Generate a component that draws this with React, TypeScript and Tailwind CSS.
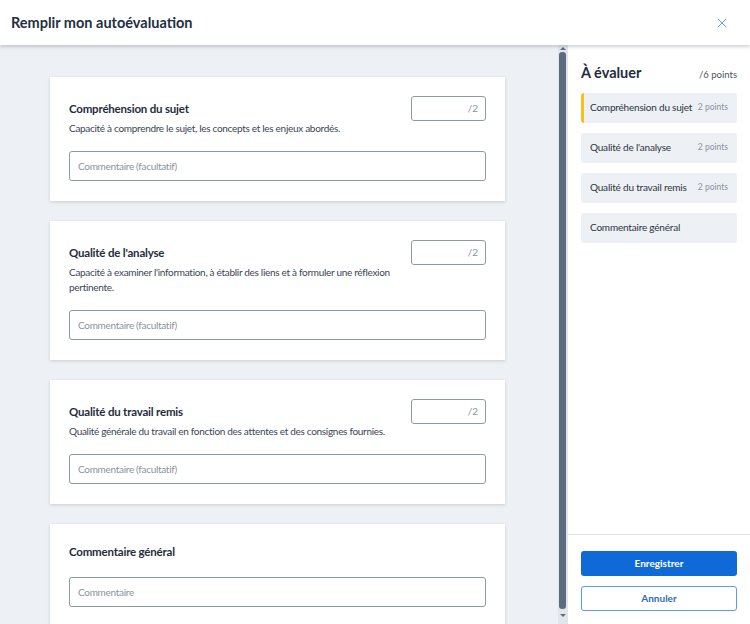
import { X } from "lucide-react";

type Criterion = {
  title: string;
  description?: string;
  max?: number;
  placeholder: string;
};

const criteria: Criterion[] = [
  {
    title: "Compréhension du sujet",
    description: "Capacité à comprendre le sujet, les concepts et les enjeux abordés.",
    max: 2,
    placeholder: "Commentaire (facultatif)",
  },
  {
    title: "Qualité de l'analyse",
    description:
      "Capacité à examiner l'information, à établir des liens et à formuler une réflexion pertinente.",
    max: 2,
    placeholder: "Commentaire (facultatif)",
  },
  {
    title: "Qualité du travail remis",
    description: "Qualité générale du travail en fonction des attentes et des consignes fournies.",
    max: 2,
    placeholder: "Commentaire (facultatif)",
  },
  {
    title: "Commentaire général",
    placeholder: "Commentaire",
  },
];

const summary = [
  { label: "Compréhension du sujet", points: "2 points", active: true },
  { label: "Qualité de l'analyse", points: "2 points" },
  { label: "Qualité du travail remis", points: "2 points" },
  { label: "Commentaire général" },
];

function CriterionCard({ c }: { c: Criterion }) {
  return (
    <div className="bg-white px-[19px] pt-[19px] pb-[20px] shadow-[0_1px_3px_rgba(30,45,60,0.18)]">
      {c.max ? (
        <div className="flex items-start justify-between">
          <div className="w-[336px]">
            <div className="h-[25px] flex items-center text-[11.5px] tracking-[-0.2px] font-bold text-[#1f2d3d]">
              {c.title}
            </div>
            <p className="text-[10px] tracking-[-0.3px] leading-[15px] text-[#3a4654]">{c.description}</p>
          </div>
          <div className="w-[75px] h-[25px] shrink-0 rounded-[3px] border border-[#8d99a7] flex items-center justify-end pr-[7px] text-[10px] text-[#8a939d]">
            /{c.max}
          </div>
        </div>
      ) : (
        <div className="text-[11.5px] tracking-[-0.2px] font-bold text-[#1f2d3d] leading-[15px] pt-[1px]">
          {c.title}
        </div>
      )}
      <input
        placeholder={c.placeholder}
        className={`block w-full h-[30px] rounded-[3px] border border-[#8d99a7] px-[8px] text-[10px] tracking-[-0.3px] text-[#1f2d3d] placeholder:text-[#8a939d] outline-none ${
          c.max ? "mt-[15px]" : "mt-[18px]"
        }`}
      />
    </div>
  );
}

export default function App() {
  return (
    <div
      className="w-[750px] h-[624px] flex flex-col bg-white overflow-hidden"
      style={{ fontFamily: "Lato, 'Noto Sans', sans-serif" }}
    >
      {/* Header */}
      <header className="relative z-10 h-[45px] shrink-0 flex items-center justify-between pl-[11px] pr-[20px] bg-white shadow-[0_2px_3px_rgba(30,45,60,0.2)]">
        <h1 className="text-[14.5px] font-bold text-[#22303f]">Remplir mon autoévaluation</h1>
        <X size={16} strokeWidth={1.3} className="text-[#4a90e2]" />
      </header>

      <div className="flex flex-1 min-h-0">
        {/* Criteria list */}
        <main className="w-[558px] bg-[#edf0f4] pt-[32px] overflow-hidden">
          <div className="w-[455px] ml-[50px] flex flex-col gap-[20px]">
            {criteria.map((c) => (
              <CriterionCard key={c.title} c={c} />
            ))}
          </div>
        </main>

        {/* Scrollbar */}
        <div className="w-[9px] flex flex-col items-center bg-[#e2e6eb]">
          <div className="h-[6px] flex items-end pb-[1px]">
            <div className="w-0 h-0 border-x-[3px] border-x-transparent border-b-[3px] border-b-[#5b6c80]" />
          </div>
          <div className="w-[7px] flex-1 rounded-[3px] bg-[#5b6c80] my-[1px]" />
          <div className="h-[14px] flex items-start pt-[4px]">
            <div className="w-0 h-0 border-x-[3px] border-x-transparent border-t-[3px] border-t-[#5b6c80]" />
          </div>
        </div>

        {/* Summary panel */}
        <aside className="flex-1 flex flex-col border-l border-[#e1e5ea]">
          <div className="flex-1 px-[13px] pt-[17px]">
            <div className="flex items-baseline justify-between mb-[9px]">
              <h2 className="text-[14.5px] font-bold text-[#1f2d3d]">À évaluer</h2>
              <span className="text-[9.5px] text-[#4a5562]">/6 points</span>
            </div>
            <div className="flex flex-col gap-[10px]">
              {summary.map((s) => (
                <div
                  key={s.label}
                  className={`h-[30px] flex items-center justify-between whitespace-nowrap rounded-[3px] bg-[#edf0f4] pr-[9px] ${
                    s.active ? "border-l-[3px] border-[#f4c21a] pl-[6px]" : "pl-[9px]"
                  }`}
                >
                  <span className="text-[10px] tracking-[-0.2px] text-[#2a3542]">{s.label}</span>
                  {s.points && <span className="text-[8.5px] text-[#8a939d]">{s.points}</span>}
                </div>
              ))}
            </div>
          </div>
          <div className="border-t border-[#e1e5ea] px-[13px] pt-[16px] pb-[13px] flex flex-col gap-[10px]">
            <button className="h-[25px] rounded-[3px] bg-[#0f69d6] text-white text-[10px] font-bold">
              Enregistrer
            </button>
            <button className="h-[25px] rounded-[3px] border border-[#5b9de8] bg-white text-[#2d6cc0] text-[10px] font-bold">
              Annuler
            </button>
          </div>
        </aside>
      </div>
    </div>
  );
}
